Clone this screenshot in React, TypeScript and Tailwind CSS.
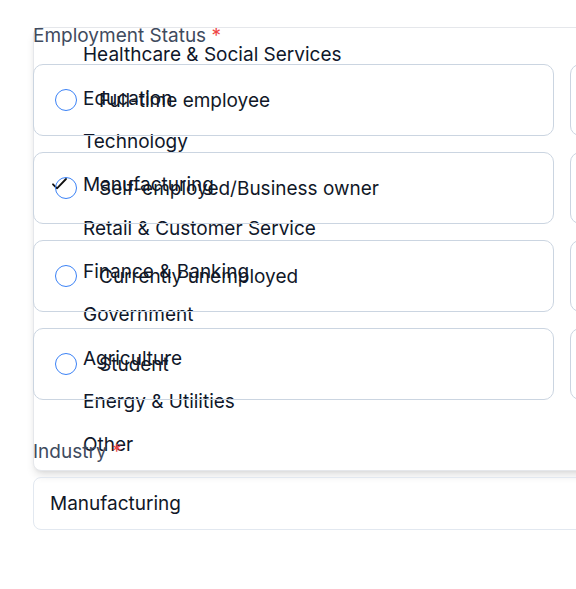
import React from "react";

const industries = [
    "Healthcare & Social Services",
    "Education",
    "Technology",
    "Manufacturing",
    "Retail & Customer Service",
    "Finance & Banking",
    "Government",
    "Agriculture",
    "Energy & Utilities",
    "Other",
];

const statuses = [
    "Full-time employee",
    "Part-time employee",
    "Self-employed/Business owner",
    "Retired",
    "Currently unemployed",
    "Homemaker",
    "Student",
    "Other",
];

export default function App() {
    const selected = "Manufacturing";

    return (
        <div className="min-h-screen bg-white overflow-hidden font-[family-name:Inter,sans-serif] pl-[33px] pt-[22px]">
            <div className="relative w-[1058px]">
                {/* Open industry listbox (rendered under the form) */}
                <div className="absolute left-0 top-[5px] w-full z-0 bg-white border border-[#e5e7eb] rounded-lg shadow-[0_6px_10px_-2px_rgba(0,0,0,0.12),0_2px_4px_-2px_rgba(0,0,0,0.08)] pt-[5px] pb-[4px]">
                    {industries.map((item) => (
                        <div
                            key={item}
                            className="relative h-[43.33px] flex items-center pt-[2px] pl-[49px] text-[19px] text-[#0f172a]"
                        >
                            {item === selected && (
                                <svg
                                    className="absolute left-[18px] top-1/2 -translate-y-[60%]"
                                    width="15"
                                    height="12"
                                    viewBox="0 0 15 12"
                                    fill="none"
                                >
                                    <path d="M1 6.5 L5 10.5 L14 1.2" stroke="#111" strokeWidth="1.8" strokeLinecap="round" strokeLinejoin="round" />
                                </svg>
                            )}
                            {item}
                        </div>
                    ))}
                </div>

                <div className="relative z-10">
                    <div className="text-[19px] leading-[28px] text-[#3f4b5e] mb-[14px]">
                        Employment Status <span className="text-[#ef4444]">*</span>
                    </div>
                    <div className="grid grid-cols-2 gap-x-4 gap-y-4">
                        {statuses.map((s) => (
                            <div
                                key={s}
                                className="h-[72px] flex items-center border border-[#cbd5e1] rounded-[10px] pl-[21px]"
                            >
                                <span className="w-[22px] h-[22px] rounded-full border-[1.5px] border-[#3b82f6] shrink-0"></span>
                                <span className="ml-[22px] pt-[2px] text-[19px] text-[#111827]">{s}</span>
                            </div>
                        ))}
                    </div>

                    <div className="mt-[38px] text-[19px] leading-[28px] text-[#3f4b5e]">
                        Industry <span className="text-[#ef4444]">*</span>
                    </div>
                    <div className="mt-[11px] h-[53px] flex items-center border border-[#e2e8f0] rounded-lg pt-[2px] pl-[16px] text-[19px] text-[#111827]">
                        Manufacturing
                    </div>
                </div>
            </div>
        </div>
    );
}
